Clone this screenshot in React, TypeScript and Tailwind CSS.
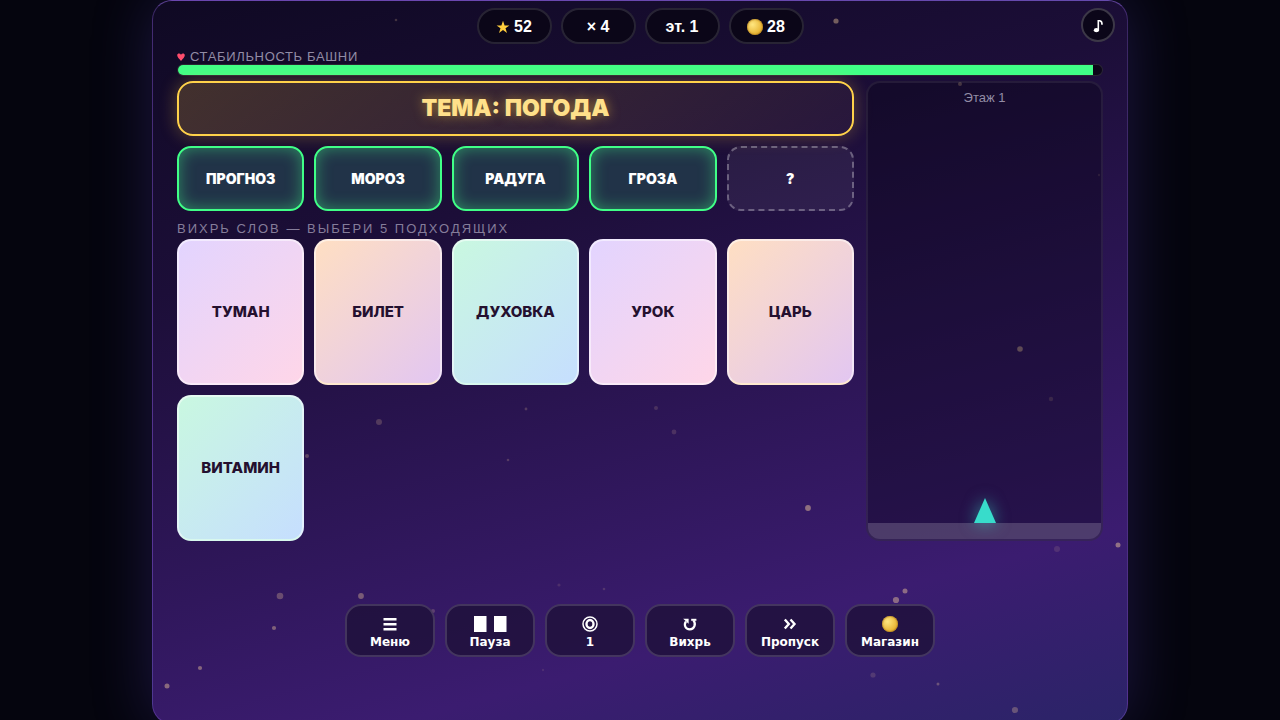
import React from "react";

type Star = { x: number; y: number; r: number; o: number };

const stars: Star[] = [
  { x: 836, y: 21, r: 2.6, o: 0.4 },
  { x: 396, y: 20, r: 1.3, o: 0.2 },
  { x: 960, y: 84, r: 2, o: 0.35 },
  { x: 1099, y: 175, r: 1.2, o: 0.15 },
  { x: 1020, y: 349, r: 2.8, o: 0.5 },
  { x: 1051, y: 399, r: 2.2, o: 0.2 },
  { x: 379, y: 422, r: 3, o: 0.2 },
  { x: 526, y: 409, r: 1.4, o: 0.2 },
  { x: 656, y: 408, r: 2, o: 0.15 },
  { x: 674, y: 432, r: 2.4, o: 0.15 },
  { x: 307, y: 456, r: 2, o: 0.25 },
  { x: 508, y: 460, r: 1.3, o: 0.2 },
  { x: 808, y: 508, r: 2.9, o: 0.45 },
  { x: 1118, y: 545, r: 2.5, o: 0.45 },
  { x: 1057, y: 549, r: 3, o: 0.12 },
  { x: 559, y: 585, r: 1.6, o: 0.12 },
  { x: 604, y: 589, r: 1.3, o: 0.15 },
  { x: 280, y: 596, r: 3.3, o: 0.28 },
  { x: 361, y: 596, r: 2.9, o: 0.35 },
  { x: 433, y: 611, r: 2, o: 0.2 },
  { x: 905, y: 591, r: 2.5, o: 0.42 },
  { x: 896, y: 600, r: 3.1, o: 0.42 },
  { x: 274, y: 628, r: 2.1, o: 0.38 },
  { x: 200, y: 668, r: 2.1, o: 0.4 },
  { x: 167, y: 686, r: 2.5, o: 0.42 },
  { x: 873, y: 675, r: 2.6, o: 0.15 },
  { x: 938, y: 684, r: 1.5, o: 0.28 },
  { x: 543, y: 670, r: 1.2, o: 0.1 },
  { x: 1015, y: 710, r: 3.1, o: 0.28 },
];

const tones = {
  pink: "bg-[linear-gradient(135deg,#e2d4ff,#ffd6e8)]",
  peach: "bg-[linear-gradient(135deg,#ffdfc2,#e2c6f2)] border-b-[#ffe9cf]",
  mint: "bg-[linear-gradient(135deg,#c9f8e0,#c6deff)] border-b-[#d8f8ee]",
};

const words: { text: string; tone: keyof typeof tones }[] = [
  { text: "ТУМАН", tone: "pink" },
  { text: "БИЛЕТ", tone: "peach" },
  { text: "ДУХОВКА", tone: "mint" },
  { text: "УРОК", tone: "pink" },
  { text: "ЦАРЬ", tone: "peach" },
  { text: "ВИТАМИН", tone: "mint" },
];

const picked = ["ПРОГНОЗ", "МОРОЗ", "РАДУГА", "ГРОЗА"];

function Coin() {
  return (
    <span className="inline-block size-4 shrink-0 rounded-full bg-[radial-gradient(circle_at_35%_35%,#ffe680,#e8b636_65%,#b47a10)] shadow-[inset_0_0_1px_1px_#a8741a80]" />
  );
}

function Pill({ children }: { children: React.ReactNode }) {
  return (
    <div className="flex h-9 min-w-[75px] items-center justify-center gap-1 rounded-full border-2 border-white/12 bg-[#0a0616]/90 px-3 pt-0.5 text-base font-bold text-white">
      {children}
    </div>
  );
}

function MenuIcon() {
  return (
    <svg viewBox="0 0 16 16" className="size-4" fill="currentColor" aria-hidden="true">
      <path d="M1.500 2h13v2.500h-13zM1.500 7h13v2.500h-13zM1.500 12h13v2.500h-13z" />
    </svg>
  );
}

function PauseIcon() {
  return (
    <svg viewBox="0 0 34 16" className="h-4 w-[34px]" fill="currentColor" aria-hidden="true">
      <path d="M1 0h12.500v16H1zM21 0h12.500v16H21z" />
    </svg>
  );
}

function TargetIcon() {
  return (
    <svg viewBox="0 0 16 16" className="size-4" fill="none" stroke="currentColor" aria-hidden="true">
      <circle cx="8" cy="8" r="7" strokeWidth="1.500" />
      <ellipse cx="8" cy="8" rx="3.500" ry="4" strokeWidth="2.400" />
    </svg>
  );
}

function SwirlIcon() {
  return (
    <svg viewBox="0 0 16 16" className="size-4" fill="none" stroke="currentColor" aria-hidden="true">
      <path d="M4 5.500C1.600 8.600 3.200 13.400 7.800 13.400s6.600-5.600 3.600-8.800" strokeWidth="2.200" />
      <path d="M9.200 3.800h5.200" strokeWidth="2" />
      <path d="M1.200 2.800h5.400v5z" fill="currentColor" stroke="none" />
    </svg>
  );
}

function SkipIcon() {
  return (
    <svg viewBox="0 0 14 14" className="size-3.5" fill="none" stroke="currentColor" strokeWidth="2.400" aria-hidden="true">
      <path d="M1.800 2.500 5.800 7 1.800 11.500M7.500 2.500 11.500 7 7.500 11.500" />
    </svg>
  );
}

const actions = [
  { label: "Меню", icon: <MenuIcon /> },
  { label: "Пауза", icon: <PauseIcon /> },
  { label: "1", icon: <TargetIcon /> },
  { label: "Вихрь", icon: <SwirlIcon /> },
  { label: "Пропуск", icon: <SkipIcon /> },
  { label: "Магазин", icon: <Coin /> },
];

export default function App() {
  return (
    <div className="flex min-h-screen justify-center overflow-hidden bg-[#05050e] font-['Liberation_Sans',Arial,sans-serif]">
      <main className="relative isolate -mb-1 flex w-full max-w-[976px] flex-col overflow-hidden rounded-[20px] border border-[#8c64dc]/35 border-t-[#8c64dc]/60 bg-[linear-gradient(165deg,#0f0923,#1c0e38_30%,#3b1c70_80%,#2b2468)] shadow-[0_0_60px_#503cb450]">
        <svg className="absolute inset-0 -z-10 size-full" aria-hidden="true">
          {stars.map((s) => (
            <circle
              key={`${s.x}-${s.y}`}
              cx={`${((s.x - 153) / 974) * 100}%`}
              cy={`${((s.y - 1) / 722) * 100}%`}
              r={s.r}
              fill="#ffd9a0"
              fillOpacity={s.o}
            />
          ))}
        </svg>

        <header className="grid grid-cols-[1fr_auto_1fr] items-start px-3 pt-[7px]">
          <div className="col-start-2 flex gap-[9px]">
            <Pill>
              <svg viewBox="0 0 14 14" className="size-3.5" fill="#ffce3d" aria-hidden="true">
                <path d="M7 .8 8.600 5.400h4.800L9.500 8.200 11 13 7 10.100 3 13l1.500-4.800L.6 5.400h4.800z" />
              </svg>
              52
            </Pill>
            <Pill>
              <span>× 4</span>
            </Pill>
            <Pill>
              <span>эт. 1</span>
            </Pill>
            <Pill>
              <Coin />
              28
            </Pill>
          </div>
          <button
            type="button"
            aria-label="Музыка"
            className="flex size-[34px] items-center justify-center justify-self-end rounded-full border-2 border-white/20 bg-[#0a0616]/90 pt-0.5 text-white"
          >
            <svg viewBox="0 0 14 14" className="size-3.5" aria-hidden="true">
              <ellipse cx="5.400" cy="11.200" rx="2.600" ry="2.100" fill="currentColor" />
              <path d="M7.300 11V1.800h1.500c2 .4 2.400 1.600 2.200 4" fill="none" stroke="currentColor" strokeWidth="1.600" />
            </svg>
          </button>
        </header>

        <div className="mx-6 mt-1">
          <div className="flex h-4 items-end gap-[5px] text-[13px] leading-[15px] tracking-wider text-[#928ca5]">
            <svg viewBox="0 0 8 8" className="mb-[3px] size-2" fill="#ff4d6d" aria-hidden="true">
              <path d="M4 8C2 5.600.2 4.200.2 2.300.2.200 3 0 4 1.700 5 0 7.800.2 7.800 2.300 7.800 4.200 6 5.600 4 8z" />
            </svg>
            СТАБИЛЬНОСТЬ БАШНИ
          </div>
          <div
            role="progressbar"
            aria-valuenow={99}
            aria-label="Стабильность башни"
            className="h-3 overflow-hidden rounded-full border border-white/12 bg-[#0c0719]"
          >
            <div className="h-full w-[99%] bg-[#40ff87]" />
          </div>
        </div>

        <div className="mx-6 mt-[5px] grid grid-cols-[1fr_237px] gap-3">
          <section className="flex flex-col">
            <h1 className="flex h-[55px] items-center justify-center rounded-2xl border-2 border-[#ffd24a] bg-[linear-gradient(135deg,#ffc83c33,#ffb4780d)] font-['Inter',sans-serif] text-[23px] font-black text-[#ffe08a] shadow-[0_0_18px_#ffc83c50] [text-shadow:0_0_12px_#ffc83c90]">
              ТЕМА: ПОГОДА
            </h1>
            <div className="mt-2.5 grid grid-cols-5 gap-2.5 font-['Inter',sans-serif] text-sm font-black text-white">
              {picked.map((w) => (
                <div
                  key={w}
                  className="flex h-[65px] items-center justify-center rounded-[14px] border-2 border-[#40ff87] bg-[#213348] shadow-[inset_0_0_16px_#40ff8770]"
                >
                  {w}
                </div>
              ))}
              <div className="flex h-[65px] items-center justify-center rounded-[14px] border-2 border-dashed border-white/30 bg-white/6">
                ?
              </div>
            </div>
            <h2 className="mt-2.5 mb-0.5 h-4 text-[13px] leading-4 tracking-[2px] text-[#857d9a]">
              ВИХРЬ СЛОВ — ВЫБЕРИ 5 ПОДХОДЯЩИХ
            </h2>
            <div className="grid grid-cols-5 gap-2.5">
              {words.map((w) => (
                <button
                  key={w.text}
                  type="button"
                  className={`h-[146px] rounded-[14px] border-2 border-white/50 bg-origin-border font-['Inter',sans-serif] text-[15px] font-extrabold text-[#24102f] ${tones[w.tone]}`}
                >
                  {w.text}
                </button>
              ))}
            </div>
          </section>

          <aside className="flex h-[460px] flex-col items-center overflow-hidden rounded-[14px] border-2 border-white/7 bg-[#0a0519]/40">
            <p className="mt-[7px] text-[13px] leading-4 text-[#928ca5]">Этаж 1</p>
            <svg
              viewBox="0 0 22 25"
              className="mt-auto h-[25px] w-[22px] overflow-visible drop-shadow-[0_0_8px_#38e0cc90]"
              fill="#38dccb"
              aria-hidden="true"
            >
              <path d="M11 0 22 25H0z" />
            </svg>
            <div className="h-4 w-full bg-white/18" />
          </aside>
        </div>

        <nav className="mt-[63px] flex justify-center gap-2.5">
          {actions.map((a) => (
            <button
              key={a.label}
              type="button"
              className="flex h-[53px] w-[90px] flex-col items-center justify-center rounded-2xl border-2 border-white/15 bg-[#1e1038]/80 pt-0.5 font-['DejaVu_Sans',sans-serif] text-xs leading-4 font-bold text-white"
            >
              <span className="flex h-5 items-center">{a.icon}</span>
              {a.label}
            </button>
          ))}
        </nav>
      </main>
    </div>
  );
}
